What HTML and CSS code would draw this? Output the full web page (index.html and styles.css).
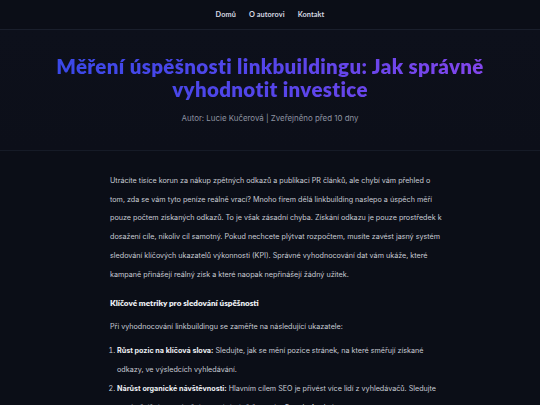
FILE: index.html
```html
<!DOCTYPE html>
<html lang="cs">
<head>
<meta charset="utf-8">
<title>Měření úspěšnosti linkbuildingu</title>
<link rel="stylesheet" href="styles.css">
</head>
<body>
<nav class="nav">
  <a href="#">Domů</a>
  <a href="#">O autorovi</a>
  <a href="#">Kontakt</a>
</nav>
<header class="hero">
  <h1 class="title">Měření úspěšnosti linkbuildingu: Jak správně vyhodnotit investice</h1>
  <p class="meta">Autor: Lucie Kučerová | Zveřejněno před 10 dny</p>
</header>
<main class="article">
  <p>Utrácíte tisíce korun za nákup zpětných odkazů a publikaci PR článků, ale chybí vám přehled o tom, zda se vám tyto peníze reálně vrací? Mnoho firem dělá linkbuilding naslepo a úspěch měří pouze počtem získaných odkazů. To je však zásadní chyba. Získání odkazu je pouze prostředek k dosažení cíle, nikoliv cíl samotný. Pokud nechcete plýtvat rozpočtem, musíte zavést jasný systém sledování klíčových ukazatelů výkonnosti (KPI). Správné vyhodnocování dat vám ukáže, které kampaně přinášejí reálný zisk a které naopak nepřinášejí žádný užitek.</p>
  <h2>Klíčové metriky pro sledování úspěšnosti</h2>
  <p class="lead">Při vyhodnocování linkbuildingu se zaměřte na následující ukazatele:</p>
  <ol class="list">
    <li><strong>Růst pozic na klíčová slova:</strong> Sledujte, jak se mění pozice stránek, na které směřují získané odkazy, ve výsledcích vyhledávání.</li>
    <li><strong>Nárůst organické návštěvnosti:</strong> Hlavním cílem SEO je přivést více lidí z vyhledávačů. Sledujte meziměsíční a meziroční srovnání návštěvnosti v Google Analytics.</li>
  </ol>
</main>
</body>
</html>
```

FILE: styles.css
```css
html, body {
  margin: 0;
  padding: 0;
  background: #0b0e17;
}
body {
  font-family: Inter, "Liberation Sans", sans-serif;
  color: #c8cbd4;
}
.nav {
  height: 29px;
  border-bottom: 1px solid #1a1f2c;
  display: flex;
  justify-content: center;
  align-items: center;
  gap: 13px;
  font-family: Lato, "Liberation Sans", sans-serif;
}
.nav a {
  color: #d6d9e2;
  text-decoration: none;
  font-size: 7.3px;
  font-weight: 700;
  letter-spacing: 0.1px;
}
.hero {
  background: linear-gradient(180deg, #0d101b 0%, #0c0f19 100%);
  border-bottom: 1px solid #161b27;
  padding: 25px 40px 26px;
  text-align: center;
}
.title {
  margin: 0 auto;
  max-width: 460px;
  font-family: Lato, "Liberation Sans", sans-serif;
  font-weight: 800;
  font-size: 20.5px;
  line-height: 23px;
  letter-spacing: 0.35px;
  background: linear-gradient(90deg, #3849e8 0%, #5545ea 50%, #8646ec 100%);
  -webkit-background-clip: text;
  background-clip: text;
  color: transparent;
}
.meta {
  margin: 11px 0 0;
  font-size: 7.9px;
  line-height: 12px;
  color: #8e93a1;
}
.article {
  width: 335px;
  margin: 0 0 0 110px;
  padding: 21px 0 0;
  font-size: 7.2px;
  line-height: 18.7px;
}
.article p {
  margin: 0;
}
.article h2 {
  margin: 12px 0 8px;
  font-family: Lato, "Liberation Sans", sans-serif;
  font-size: 8.1px;
  line-height: 14px;
  font-weight: 800;
  color: #eceef3;
}
.list {
  margin: 5px 0 0;
  padding-left: 7px;
}
.list li {
  margin-bottom: 0.5px;
}
.list strong {
  color: #eceef3;
  font-weight: 700;
}
```
